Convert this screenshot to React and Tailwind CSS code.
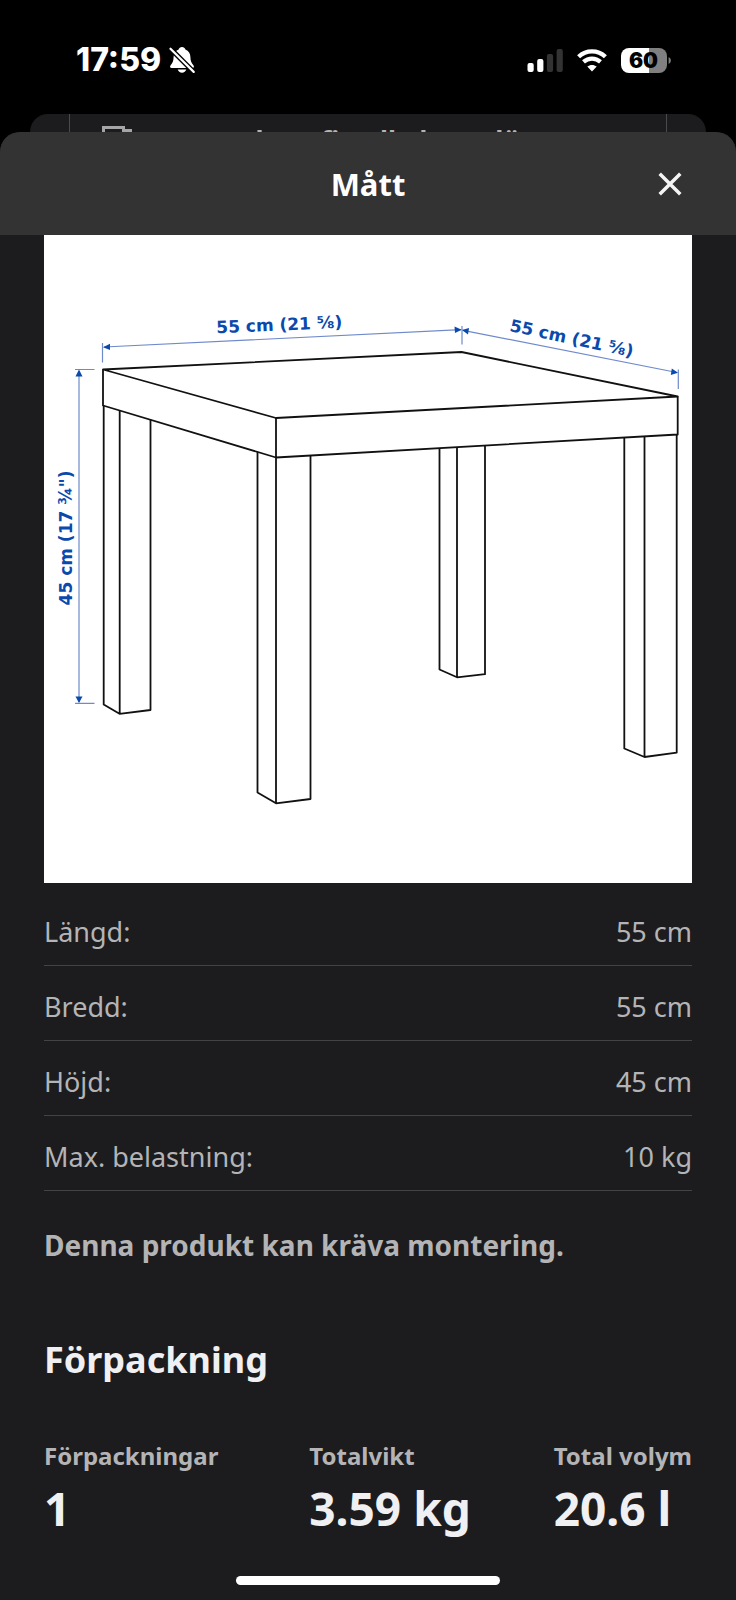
import React from "react";

const NOTO = "font-['Noto_Sans','Open_Sans',sans-serif]";

function StatusBar() {
  return (
    <div className="flex h-[114px] items-center justify-between pl-[76px] pr-[64px] text-white font-['Inter',sans-serif]">
      <div className="flex items-center gap-2 pt-[6px]">
        <span className="text-[32px] leading-10 font-extrabold">17:59</span>
        <svg className="h-7 w-[26px]" viewBox="0 0 26 28" role="img" aria-label="Ljudlöst läge">
          <path
            fill="#fff"
            d="M13 1c-1.700 0-3 1-3.400 2.500C6.200 4.800 4.700 7.500 4.600 11c-.1 4-1 6-3 8.200-1 1.200-.6 2.800 1 2.800h20.800c1.600 0 2-1.600 1-2.800-2-2.200-2.900-4.200-3-8.200-.1-3.500-1.600-6.200-5-7.500C16 2 14.700 1 13 1zM8.700 23.500h8.600c-.6 2-2.200 3.200-4.300 3.200s-3.700-1.200-4.300-3.200z"
          />
          <path d="M0 1.200 26 27.200" stroke="#000" strokeWidth="5" />
          <path d="M1.500 2.700 24.700 25.900" stroke="#fff" strokeWidth="2.200" strokeLinecap="round" />
        </svg>
      </div>
      <div className="flex items-center gap-[14px] pt-[6px]">
        <svg className="h-[23px] w-9" viewBox="0 0 36 23" role="img" aria-label="Mobilsignal">
          <rect x="0.500" y="14" width="6.200" height="9" rx="2" fill="#fff" />
          <rect x="10.200" y="10" width="6.200" height="13" rx="2" fill="#fff" />
          <rect x="19.900" y="5" width="6.200" height="18" rx="2" fill="#333" />
          <rect x="29.600" y="0" width="6.200" height="23" rx="2" fill="#333" />
        </svg>
        <svg className="h-[23px] w-[30px]" viewBox="0 0 30 23" role="img" aria-label="Wifi">
          <path d="M1.600 7.800C9.200.6 20.800.6 28.400 7.800" fill="none" stroke="#fff" strokeWidth="4.300" />
          <path d="M6.500 12.900c4.900-4.500 12.100-4.500 17 0" fill="none" stroke="#fff" strokeWidth="4.200" />
          <path d="M15 22.500 10.300 17.600c2.700-2.300 6.700-2.300 9.400 0z" fill="#fff" />
        </svg>
        <svg className="h-[25px] w-[51px]" viewBox="0 0 51 25" role="img" aria-label="Batteri 60 procent">
          <path d="M8 0H28V25H8a8 8 0 0 1-8-8V8a8 8 0 0 1 8-8z" fill="#fff" />
          <path d="M28 0H38a8 8 0 0 1 8 8v9a8 8 0 0 1-8 8H28z" fill="#808080" />
          <path d="M47.600 9c3 1.500 3 5.500 0 7z" fill="#808080" />
          <text x="22.500" y="20" textAnchor="middle" fontSize="21" fontWeight="900" fontFamily="Inter, sans-serif" fill="#000">
            60
          </text>
        </svg>
      </div>
    </div>
  );
}

function PreviousSheet() {
  return (
    <div className="mx-[30px] h-[18px] rounded-t-[18px] bg-[#1c1c1e] px-[39px]">
      <div className="flex h-[18px] overflow-hidden border-x border-[#4a4a4c] pl-8">
        <svg className="mt-3 h-6 w-8 shrink-0" viewBox="0 0 32 24" fill="none" stroke="#a5a5a7" strokeWidth="3" aria-hidden="true">
          <path d="M1.500 24V1.500H21.500V4.500H30" />
        </svg>
        <p className={`mt-[9px] ml-[30px] text-[27px] leading-9 font-bold whitespace-nowrap text-[#b4b4b6] ${NOTO}`}>
          Mer och en fin alla kom dörr
        </p>
      </div>
    </div>
  );
}

const INK = "#111";
const BLUE = "#0b4aad";

function TableDrawing() {
  return (
    <svg className="block w-full bg-white" viewBox="44 235 648 648" role="img" aria-label="Måttskiss av bordet">
      <g fill="none" stroke={INK} strokeWidth="1.800" strokeLinejoin="round">
        <path d="M103 369.500 461.500 352 677.700 396.500 276 418z" />
        <path d="M103 369.500V405.500L276 457.500V418M276 457.500 677.700 434.500V396.500" />
        <path d="M103.700 405.500V704.500L119.500 713.800 150.500 710V419.500M119.700 410.500V713.800" />
        <path d="M257.500 452V792.500L276 803.300 310.500 799V455.500M276 457.500V803.300" />
        <path d="M439.500 448V669.500L457 677.300 485 674.200V445.500M457 447V677.300" />
        <path d="M624.300 437.500V748.500L644.500 757 676.700 752.700V434.500M644.500 436.500V757" />
      </g>
      <g fill="none" stroke="#6f8acb" strokeWidth="1.200">
        <path d="M102.500 343V362.500M104 347 461 329.700M462 326V344.500M463 330.300 677 372.500M678.300 369.500V389" />
        <path d="M75 369.500H94.500M79 371V702M75 703.300H94.500" />
      </g>
      <g fill={BLUE}>
        <path d="M103 347.200 110 343.700V350z" />
        <path d="M461.700 329.700 454.500 326.500 455 333z" />
        <path d="M462 330 469 328 468 334.500z" />
        <path d="M678 372.800 671.800 368.500 670.800 375z" />
        <path d="M79 369.500 75.500 376.500H82.500z" />
        <path d="M79 703 75.500 696.500H82.500z" />
      </g>
      <g fill={BLUE} fontFamily="Verdana, 'DejaVu Sans', sans-serif" fontWeight="700" fontSize="17" textAnchor="middle">
        <text transform="translate(279.500 330.500) rotate(-2.500)">55 cm (21 ⅝)</text>
        <text transform="translate(570.500 344) rotate(12)">55 cm (21 ⅝)</text>
        <text transform="translate(71.500 538) rotate(-90)">45 cm (17 ¾")</text>
      </g>
    </svg>
  );
}

const measurements = [
  ["Längd:", "55 cm"],
  ["Bredd:", "55 cm"],
  ["Höjd:", "45 cm"],
  ["Max. belastning:", "10 kg"],
];

const packaging = [
  ["Förpackningar", "1"],
  ["Totalvikt", "3.59 kg"],
  ["Total volym", "20.6 l"],
];

export default function App() {
  return (
    <div className="flex min-h-screen flex-col bg-black">
      <StatusBar />
      <PreviousSheet />
      <main className={`flex flex-1 flex-col overflow-hidden rounded-t-[20px] bg-[#1c1c1e] text-[#b4b4b6] ${NOTO}`}>
        <header className="grid h-[103px] grid-cols-[1fr_auto_1fr] items-center bg-[#333] px-11">
          <h1 className="col-start-2 text-[31px] leading-10 font-bold text-white">Mått</h1>
          <button type="button" aria-label="Stäng" className="flex size-11 items-center justify-center justify-self-end">
            <svg className="size-6" viewBox="0 0 24 24" fill="none" stroke="#f5f5f5" strokeWidth="3.500" aria-hidden="true">
              <path d="M1.700 1.700 22.300 22.300M22.300 1.700 1.700 22.300" />
            </svg>
          </button>
        </header>
        <div className="px-11">
          <TableDrawing />
          <dl className="pt-2">
            {measurements.map(([label, value]) => (
              <div key={label} className="flex h-[75px] items-end justify-between border-b border-[#434345] pb-[13px] text-[27px] leading-10">
                <dt>{label}</dt>
                <dd>{value}</dd>
              </div>
            ))}
          </dl>
          <p className="mt-[34px] text-[28px] leading-10 font-bold">Denna produkt kan kräva montering.</p>
          <h2 className="mt-[69px] text-4xl leading-[52px] font-bold text-[#f0f0f2]">Förpackning</h2>
          <dl className="mt-[52px] flex justify-between">
            {packaging.map(([label, value]) => (
              <div key={label} className="first:pr-2">
                <dt className="text-2xl leading-9 font-bold">{label}</dt>
                <dd className="text-[46px] leading-[68px] font-bold text-[#f0f0f2]">{value}</dd>
              </div>
            ))}
          </dl>
        </div>
        <div className="mx-auto mt-auto mb-[15px] h-[9px] w-[264px] rounded-full bg-white" />
      </main>
    </div>
  );
}
